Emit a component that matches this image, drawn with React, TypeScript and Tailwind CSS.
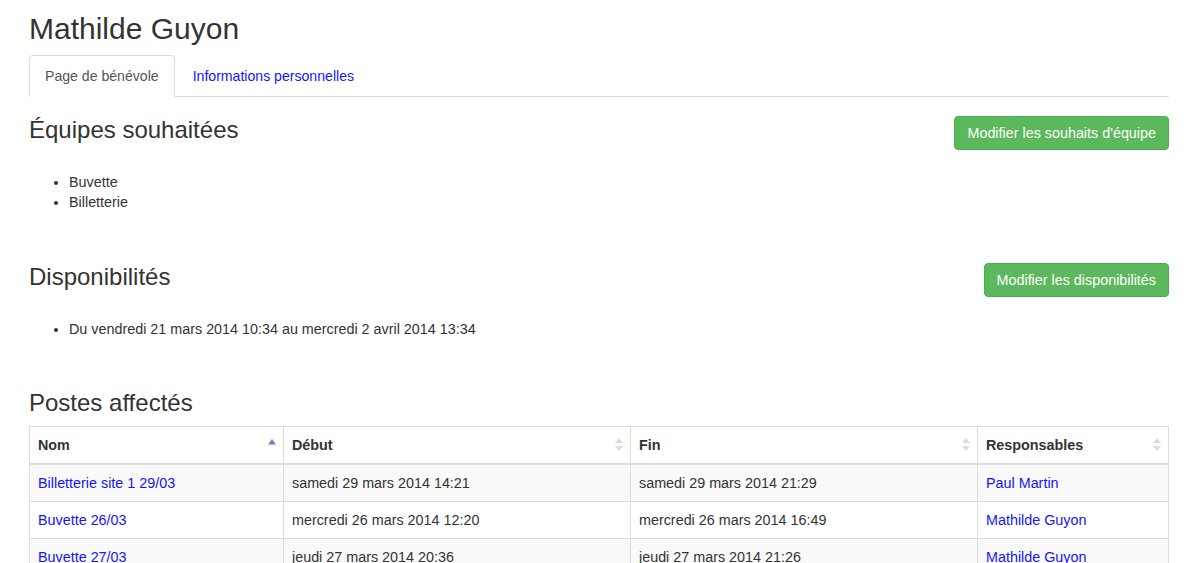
import React from 'react'

const rows = [
  { nom: 'Billetterie site 1 29/03', debut: 'samedi 29 mars 2014 14:21', fin: 'samedi 29 mars 2014 21:29', resp: 'Paul Martin' },
  { nom: 'Buvette 26/03', debut: 'mercredi 26 mars 2014 12:20', fin: 'mercredi 26 mars 2014 16:49', resp: 'Mathilde Guyon' },
  { nom: 'Buvette 27/03', debut: 'jeudi 27 mars 2014 20:36', fin: 'jeudi 27 mars 2014 21:26', resp: 'Mathilde Guyon' },
  { nom: 'Buvette 28/03', debut: 'vendredi 28 mars 2014 18:00', fin: 'vendredi 28 mars 2014 23:00', resp: 'Mathilde Guyon' },
]

const SortBoth = () => (
  <svg width="8" height="14" viewBox="0 0 8 14" className="absolute right-[7px] top-1/2 -translate-y-1/2">
    <path d="M4 0 L8 5 L0 5 Z" fill="#dcdcdc" />
    <path d="M0 8 L8 8 L4 13 Z" fill="#dcdcdc" />
  </svg>
)

const SortAsc = () => (
  <svg width="8" height="14" viewBox="0 0 8 14" className="absolute right-[7px] top-1/2 -translate-y-1/2">
    <path d="M4 1 L8 6.5 L0 6.5 Z" fill="#7b7bd8" />
  </svg>
)

const Section = ({ title, button, children }: { title: string; button?: string; children: React.ReactNode }) => (
  <div>
    <div className="flex items-start justify-between">
      <h3 className="text-[24px] leading-[26.4px] font-normal">{title}</h3>
      {button && (
        <button className="bg-[#5cb85c] border border-[#4cae4c] text-white rounded-[4px] px-[12px] py-[6px] text-[14.35px] leading-[20px] -mt-px">
          {button}
        </button>
      )}
    </div>
    {children}
  </div>
)

const App = () => {
  return (
    <div className="bg-white min-h-screen text-[#333] text-[14.35px] leading-[20px]" style={{ fontFamily: '"Liberation Sans", Arial, sans-serif' }}>
      <div className="w-[1140px] ml-[29px] pt-[12px]">
        <h2 className="text-[30px] leading-[33px] font-normal mb-[10px]">Mathilde Guyon</h2>

        <ul className="flex border-b border-[#ddd] text-[14.1px]">
          <li className="-mb-px mr-[2px]">
            <a className="block px-[15px] py-[10px] border border-[#ddd] border-b-transparent rounded-t-[4px] bg-white text-[#555]">
              Page de bénévole
            </a>
          </li>
          <li className="-mb-px mr-[2px]">
            <a className="block px-[15px] py-[10px] border border-transparent text-[#1414ff]">
              Informations personnelles
            </a>
          </li>
        </ul>

        <div className="mt-[20px]">
          <Section title="Équipes souhaitées" button="Modifier les souhaits d'équipe">
            <ul className="list-disc pl-[40px] mt-[22px]">
              <li>Buvette</li>
              <li>Billetterie</li>
            </ul>
          </Section>
        </div>

        <div className="mt-[52px]">
          <Section title="Disponibilités" button="Modifier les disponibilités">
            <ul className="list-disc pl-[40px] mt-[22px]">
              <li>Du vendredi 21 mars 2014 10:34 au mercredi 2 avril 2014 13:34</li>
            </ul>
          </Section>
        </div>

        <div className="mt-[51px]">
          <h3 className="text-[24px] leading-[26.4px] font-normal">Postes affectés</h3>
          <table className="mt-[10px] w-[1140px] table-fixed border-collapse border border-[#ddd]">
            <colgroup>
              <col className="w-[254px]" />
              <col className="w-[347px]" />
              <col className="w-[347px]" />
              <col />
            </colgroup>
            <thead>
              <tr>
                <th className="relative text-left font-bold p-[8px] border border-[#ddd] border-b-2">
                  Nom
                  <SortAsc />
                </th>
                <th className="relative text-left font-bold p-[8px] border border-[#ddd] border-b-2">
                  Début
                  <SortBoth />
                </th>
                <th className="relative text-left font-bold p-[8px] border border-[#ddd] border-b-2">
                  Fin
                  <SortBoth />
                </th>
                <th className="relative text-left font-bold p-[8px] border border-[#ddd] border-b-2">
                  Responsables
                  <SortBoth />
                </th>
              </tr>
            </thead>
            <tbody>
              {rows.map((r, i) => (
                <tr key={i} className={i % 2 === 0 ? 'bg-[#f9f9f9]' : 'bg-white'}>
                  <td className="p-[8px] border border-[#ddd]">
                    <a className="text-[#1414ff]">{r.nom}</a>
                  </td>
                  <td className="p-[8px] border border-[#ddd]">{r.debut}</td>
                  <td className="p-[8px] border border-[#ddd]">{r.fin}</td>
                  <td className="p-[8px] border border-[#ddd]">
                    <a className="text-[#1414ff]">{r.resp}</a>
                  </td>
                </tr>
              ))}
            </tbody>
          </table>
        </div>
      </div>
    </div>
  )
}

export default App
